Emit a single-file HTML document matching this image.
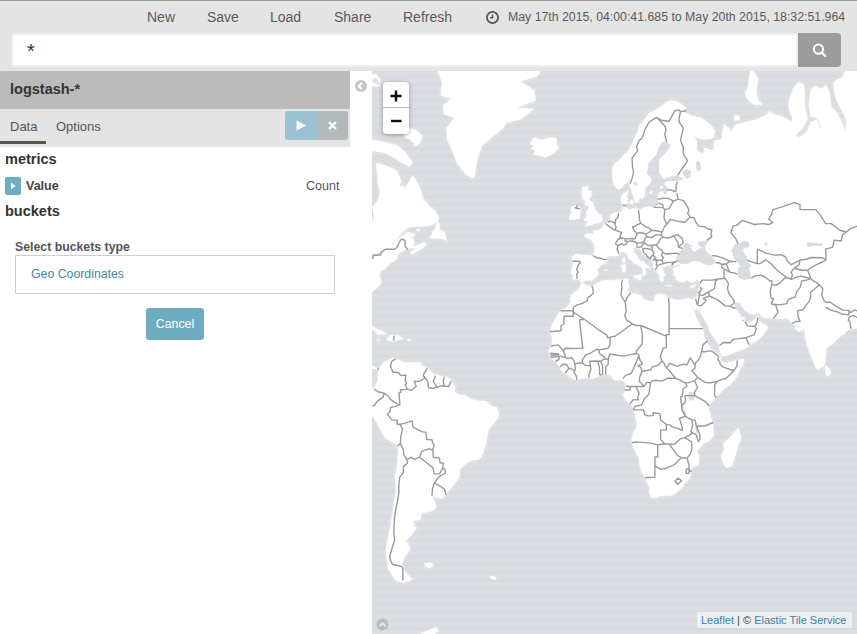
<!DOCTYPE html>
<html><head><meta charset="utf-8">
<style>
*{box-sizing:border-box;margin:0;padding:0}
html,body{width:857px;height:634px;overflow:hidden;background:#fff;font-family:"Liberation Sans",sans-serif;color:#444}
.abs{position:absolute}
#top{left:0;top:0;width:857px;height:71px;background:#e4e4e4;border-top:1px solid #9a9899;box-shadow:inset 0 1px 0 #e9e9e9}
.nav{top:7px;font-size:14px;color:#5a5a5a;white-space:nowrap;line-height:20px}
#time{left:508px;top:8px;font-size:12.3px;color:#5a5a5a;white-space:nowrap;line-height:18px}
#search{left:11px;top:33px;width:787px;height:34px;background:#fff;border:2px solid #ecf0f1;border-radius:4px 0 0 4px}
#star{left:27px;top:41px;font-size:20px;line-height:20px;color:#333}
#sbtn{left:798px;top:33px;width:43px;height:34px;background:#9c9c9c;border-radius:0 4px 4px 0}
#idx{left:0;top:71px;width:350px;height:38px;background:#bbbbbb}
#idx span{position:absolute;left:10px;top:10px;font-size:14.5px;font-weight:bold;color:#333}
#tabs{left:0;top:109px;width:350px;height:38px;background:#e4e4e4}
.tab{top:119px;font-size:13px;color:#555;line-height:16px}
#uline{left:0;top:141px;width:46px;height:3px;background:#555}
#play{left:285px;top:111px;width:32px;height:29px;background:#9ac2d3;border-radius:3px 0 0 3px}
#close{left:317px;top:111px;width:31px;height:29px;background:#b2babb;border-radius:0 3px 3px 0}
.h{font-size:14.5px;font-weight:bold;color:#333;line-height:18px}
#vicon{left:5px;top:177px;width:16px;height:18px;background:#6eadc1;border-radius:2px}
#sel{left:15px;top:255px;width:320px;height:39px;border:1px solid #cfcfcf;background:#fff}
#cancel{left:146px;top:308px;width:58px;height:32px;background:#6eadc1;border-radius:3px;color:#fff;font-size:12.3px;text-align:center;line-height:32px}
#map{left:372px;top:71px;width:485px;height:563px;overflow:hidden;background:#dadde1}
#attr{left:697px;top:612px;width:155px;height:16px;background:rgba(255,255,255,0.55);font-size:11px;line-height:16px;color:#444;padding-left:4px;white-space:nowrap}
#attr a{color:#3b7fa8;text-decoration:none}
#zoom{left:383px;top:82px;width:26px;height:52px;background:#fff;border-radius:4px;box-shadow:0 1px 4px rgba(0,0,0,0.35)}
</style></head><body>
<div id="top" class="abs"></div>
<div class="abs nav" style="left:147px">New</div>
<div class="abs nav" style="left:207px">Save</div>
<div class="abs nav" style="left:270px">Load</div>
<div class="abs nav" style="left:334px">Share</div>
<div class="abs nav" style="left:403px">Refresh</div>
<svg class="abs" style="left:485px;top:10px" width="15" height="15" viewBox="0 0 15 15"><circle cx="7.5" cy="7.5" r="5.6" fill="none" stroke="#555" stroke-width="1.8"/><path d="M7.5 4.5V7.8H5" fill="none" stroke="#555" stroke-width="1.5"/></svg>
<div id="time" class="abs">May 17th 2015, 04:00:41.685 to May 20th 2015, 18:32:51.964</div>
<div id="search" class="abs"></div>
<div id="star" class="abs">*</div>
<div id="sbtn" class="abs"><svg style="position:absolute;left:13px;top:9px" width="17" height="17" viewBox="0 0 17 17"><circle cx="7.5" cy="7.2" r="4.6" fill="none" stroke="#fff" stroke-width="2"/><path d="M10.8 10.5L14.3 14" stroke="#fff" stroke-width="2.2" stroke-linecap="round"/></svg></div>
<div id="idx" class="abs"><span>logstash-*</span></div>
<div id="tabs" class="abs"></div>
<div class="abs tab" style="left:10px">Data</div>
<div class="abs tab" style="left:56px">Options</div>
<div id="uline" class="abs"></div>
<div id="play" class="abs"><svg style="position:absolute;left:11px;top:9px" width="11" height="11" viewBox="0 0 11 11"><path d="M0.5 0.5L10 5.5L0.5 10.5Z" fill="#fff"/></svg></div>
<div id="close" class="abs"><svg style="position:absolute;left:10px;top:9px" width="11" height="11" viewBox="0 0 11 11"><path d="M2 2L9 9M9 2L2 9" stroke="#fff" stroke-width="2.2"/></svg></div>
<div class="abs h" style="left:5px;top:150px">metrics</div>
<div id="vicon" class="abs"><svg style="position:absolute;left:5px;top:5px" width="7" height="8" viewBox="0 0 7 8"><path d="M1 0.5L5.5 4L1 7.5Z" fill="#fff"/></svg></div>
<div class="abs" style="left:26px;top:179px;font-size:12.5px;font-weight:bold;color:#444">Value</div>
<div class="abs" style="left:306px;top:179px;font-size:12.5px;color:#555">Count</div>
<div class="abs h" style="left:5px;top:202px">buckets</div>
<div class="abs" style="left:15px;top:240px;font-size:12.3px;font-weight:bold;color:#555">Select buckets type</div>
<div id="sel" class="abs"></div>
<div class="abs" style="left:31px;top:267px;font-size:12.3px;color:#3f8aab">Geo Coordinates</div>
<div id="cancel" class="abs">Cancel</div>
<svg class="abs" style="left:354px;top:79px" width="14" height="14" viewBox="0 0 14 14"><circle cx="7" cy="7" r="6" fill="#c4c4c4"/><path d="M7.9 3.7L4.8 7L7.9 10.3" fill="none" stroke="#fff" stroke-width="2.2"/></svg>
<div id="map" class="abs">
<svg width="485" height="563" viewBox="372 71 485 563" style="position:absolute;left:0;top:0">
<defs>
<pattern id="wv" patternUnits="userSpaceOnUse" width="8" height="8" x="0" y="0"><path d="M-6 3.2Q-2 7.8 2 3.2Q6 7.8 10 3.2" fill="none" stroke="#d1d5da" stroke-width="1"/></pattern>
</defs>
<rect x="372" y="71" width="485" height="563" fill="#dadde1"/>
<rect x="372" y="71" width="485" height="563" fill="url(#wv)"/>
<filter id="bl" x="-5%" y="-5%" width="110%" height="110%"><feGaussianBlur stdDeviation="1.6"/></filter><path d="M437.8 71.0L442.1 83.1L440.4 95.3L450.8 98.7L443.0 105.7L443.9 114.3L454.3 117.8L446.5 128.2L447.3 140.4L452.5 150.8L457.7 164.6L464.7 173.3L473.3 178.5L475.1 175.0L476.8 161.2L482.0 145.6L490.7 138.6L502.8 128.2L506.3 123.0L520.2 119.6L534.0 109.1L516.7 107.4L535.8 100.5L534.0 90.1L520.2 81.4L537.5 76.2L541.0 71.0L548.0 50.0L430.0 50.0L432.0 60.0ZM529.7 143.9L534.0 137.6L541.1 139.7L551.1 136.9L556.5 138.3L556.8 145.9L559.3 147.3L555.3 151.9L545.4 157.7L538.3 155.2L533.4 154.5L535.4 150.6L530.3 148.6L534.6 145.9ZM629.3 18.7L637.8 25.7L644.9 43.8L660.6 32.4L674.8 11.4L669.1 -9.2L649.2 -12.6L626.4 -1.0ZM752.9 71.0L758.5 78.6L756.3 90.0L758.0 99.4L762.3 104.7L753.8 104.7L747.7 99.4L744.7 93.8L748.1 86.1L751.6 62.4L763.0 51.0ZM733.9 115.5L739.6 115.5L739.6 120.2L733.9 120.2ZM582.4 186.9L588.9 186.2L587.4 189.8L591.8 191.3L591.4 196.3L588.2 199.2L592.5 202.1L594.7 207.9L597.6 213.0L601.9 215.9L602.7 220.3L599.8 222.4L592.5 224.6L584.5 226.8L588.2 221.7L583.8 220.3L587.4 215.9L586.0 212.3L588.9 207.9L588.2 205.8L584.5 205.0L585.3 200.7L582.4 198.5L581.6 192.7ZM570.7 207.8L577.3 205.0L580.6 208.8L580.1 214.4L579.2 219.1L569.7 220.1L568.8 217.3L571.6 212.5ZM624.7 257.1L625.3 260.5L624.2 263.2L622.5 261.7L622.5 258.6ZM625.3 264.3L625.9 268.5L625.0 271.8L622.2 272.5L621.9 269.2L621.3 265.1ZM633.3 275.4L642.4 274.7L641.0 278.3L641.0 280.6L638.7 279.4L633.3 277.2ZM664.8 284.3L666.8 285.0L672.8 285.4L671.4 286.4L665.1 285.7ZM689.9 286.1L693.3 285.2L696.4 284.0L694.7 286.8L691.9 287.8L690.2 287.4ZM738.2 427.2L741.6 437.4L738.8 443.4L734.5 458.5L732.0 466.0L726.6 467.9L722.3 461.6L721.2 455.4L724.3 449.4L723.2 443.4L729.4 438.0L734.2 433.0ZM825.3 365.1L829.3 368.5L831.0 372.8L829.0 375.4L826.1 375.7L825.0 371.4ZM423.6 563.3L431.6 562.9L433.6 564.7L430.2 567.9L425.9 566.6ZM489.9 576.0L495.6 576.5L496.2 579.9L491.3 578.4ZM402.9 569.3L412.5 579.4L408.8 580.9L403.2 582.4L396.0 580.9L388.1 568.9L398.9 566.6ZM356.2 329.2L363.3 325.2L369.0 325.2L377.6 329.2L382.7 331.4L386.9 334.1L377.6 335.0L374.7 330.2L366.2 328.0L357.6 330.2ZM386.4 339.5L390.9 335.0L398.9 335.6L403.7 338.9L398.9 340.1L394.3 341.6L386.9 340.7ZM406.9 339.2L411.4 339.5L411.1 340.7L406.9 340.7ZM375.3 339.5L381.0 340.1L379.5 341.0L375.6 340.1ZM438.8 221.3L436.0 226.0L432.9 231.5L429.7 238.2L439.2 238.6L444.7 239.4L447.1 241.4L445.9 237.1L444.7 231.5L440.0 230.0L439.2 223.7ZM375.2 140.0L387.2 142.7L397.3 145.3L404.8 151.6L412.4 161.7L409.9 166.7L402.3 162.9L394.7 157.9L384.6 152.8L375.8 151.6L365.0 150.0L365.0 140.0ZM336.3 64.5L370.4 67.8L370.4 45.0L336.3 45.0ZM370.4 81.1L380.4 85.9L376.1 77.1ZM342.0 45.0L376.1 48.6L393.2 18.7L421.6 -40.8L342.0 -40.8ZM350.5 153.9L369.0 155.2L363.3 141.8L353.4 140.4ZM604.7 270.1L606.8 268.7L607.8 269.6L606.5 271.1L605.1 270.7ZM403.6 131.0L410.0 127.9L416.0 130.0L422.5 135.2L420.0 142.7L416.2 146.5L409.9 138.9L404.8 137.7ZM365.0 75.0L376.0 74.0L380.7 80.0L378.0 86.8L372.0 86.0L365.0 86.0ZM327.8 178.2L342.0 194.5L363.9 204.2L364.2 214.4L369.0 221.3L373.3 221.3L373.9 216.7L372.4 206.7L377.6 201.2L380.1 191.9L377.6 183.8L377.6 175.3L376.1 165.2L375.8 162.9L385.9 165.5L397.3 170.5L401.0 180.6L399.8 185.7L406.1 186.9L412.4 175.6L414.9 178.1L420.3 188.5L423.1 198.4L430.2 206.9L434.5 209.8L438.8 216.9L437.3 222.6L429.7 226.0L409.8 227.1L401.3 232.8L395.6 240.6L390.7 244.1L392.1 244.9L399.9 237.0L408.4 232.1L415.5 234.2L413.4 237.0L409.8 236.7L413.4 239.2L414.1 243.4L413.4 246.3L416.9 245.6L424.0 242.0L426.9 244.1L422.6 248.4L411.3 254.8L409.8 252.7L415.5 248.4L413.4 247.7L407.0 249.1L397.8 254.1L396.3 259.8L389.2 264.0L385.3 268.4L380.5 271.3L379.6 276.0L381.5 281.7L379.6 285.5L372.0 292.1L367.6 296.6L366.7 301.6L368.7 308.2L370.4 314.6L369.3 318.7L367.0 318.7L365.3 314.6L362.8 309.8L361.9 306.5L359.1 303.3L352.0 302.0L343.4 302.6L344.0 306.5L330.6 304.9L320.7 311.4L320.7 322.4L319.8 328.6L325.5 338.3L329.2 340.1L336.3 338.9L339.2 337.7L340.9 331.7L349.7 330.2L349.1 336.2L347.1 340.7L346.3 346.7L350.5 347.3L359.1 347.3L361.3 349.6L360.5 357.0L359.6 361.3L364.2 367.1L367.6 367.7L371.9 365.4L377.6 368.2L378.1 370.5L375.0 368.8L371.3 369.1L369.3 372.0L365.6 370.0L356.2 365.7L350.5 355.5L313.6 346.7L285.1 334.7L285.1 147.3ZM378.1 370.5L379.5 368.0L383.2 362.8L386.9 360.4L391.8 358.4L394.6 357.3L394.1 361.3L396.0 361.6L393.5 361.6L398.3 359.6L404.0 362.5L410.3 362.5L415.4 362.5L421.9 362.2L420.2 364.2L424.5 367.1L427.9 369.1L433.0 373.4L440.1 376.0L444.4 376.3L450.1 379.1L452.4 381.4L455.8 387.7L454.4 392.2L460.0 395.1L464.3 394.8L471.4 399.3L478.5 400.8L485.6 401.1L492.2 406.5L497.0 407.6L499.0 414.2L498.2 418.5L492.8 424.3L488.5 430.1L487.1 437.4L486.2 444.3L484.2 450.3L481.4 456.4L478.5 459.7L471.4 460.7L465.7 463.5L460.0 469.4L459.2 477.4L454.4 484.0L450.1 489.6L445.8 495.1L441.8 498.8L436.7 497.5L431.9 495.7L435.0 502.0L436.4 506.2L433.0 510.9L421.6 513.1L420.8 519.4L413.1 520.9L414.5 526.6L416.8 527.8L412.3 534.4L406.0 540.5L410.8 548.4L405.1 556.6L401.7 564.7L403.4 567.9L396.0 575.0L388.1 568.9L385.8 551.0L388.4 536.0L390.6 524.7L392.2 515.7L393.8 502.7L396.0 490.6L394.9 477.4L397.5 463.2L398.3 446.1L384.7 437.4L376.1 421.4L369.6 411.3L366.7 405.6L370.2 399.9L367.9 395.6L370.4 390.0L373.9 387.1L377.6 381.4L377.8 375.7ZM415.5 230.5L418.0 229.2L421.2 229.5L418.0 231.4ZM689.9 299.0L686.2 298.0L683.0 299.3L677.6 300.3L669.1 298.0L666.3 296.3L663.4 294.6L659.2 293.6L655.2 295.6L653.5 301.6L649.2 301.0L643.5 299.0L641.2 295.6L635.5 293.6L630.7 292.9L628.4 290.9L626.7 290.2L629.0 288.1L629.6 285.4L627.9 282.2L629.6 279.4L627.0 279.0L625.9 278.3L622.2 279.7L616.5 279.4L612.2 280.4L606.5 280.1L600.8 281.1L596.3 283.6L592.3 286.1L588.0 285.7L582.9 283.3L581.2 283.6L580.1 286.4L578.7 289.9L576.4 291.2L573.8 292.6L571.5 295.0L570.1 298.3L570.7 302.0L568.1 305.6L565.3 308.8L561.3 310.1L556.8 315.9L552.8 323.4L551.1 327.7L549.5 332.3L551.6 336.2L552.5 340.4L551.1 346.7L549.1 349.9L548.2 350.5L550.2 354.3L550.5 357.3L553.6 359.9L556.2 362.8L559.0 365.7L560.5 368.5L562.4 371.7L566.7 374.3L571.0 377.7L576.7 380.3L582.4 378.3L586.6 378.0L592.0 379.3L598.0 376.8L602.3 375.1L607.7 374.6L611.1 375.4L614.5 380.6L617.9 380.3L621.6 380.0L623.6 381.7L625.6 382.8L625.9 386.3L624.7 391.7L623.0 395.1L625.3 399.9L629.6 403.9L632.4 407.0L633.0 409.9L635.0 414.2L635.5 417.9L637.0 423.4L636.1 428.9L633.6 431.6L631.6 438.9L631.6 442.8L633.8 447.9L636.1 453.3L639.2 459.7L639.5 464.7L641.2 471.3L644.9 477.8L647.5 484.0L649.8 488.3L648.9 492.3L650.3 495.4L650.6 496.9L653.5 497.8L654.9 498.5L660.6 496.1L666.3 495.7L670.8 495.7L674.8 494.0L679.1 490.0L683.3 486.3L686.2 482.0L690.2 477.4L691.6 472.0L690.7 469.1L693.3 466.9L697.6 464.7L699.0 462.8L699.0 457.0L698.4 453.9L697.0 450.3L700.4 447.3L703.8 443.4L709.5 440.7L713.8 436.0L713.2 428.6L713.2 422.8L711.2 418.5L709.8 412.2L708.4 409.9L709.5 406.2L710.9 404.3L712.3 400.8L714.6 398.5L717.5 395.6L721.7 391.4L726.9 387.1L730.3 384.5L734.2 380.0L736.5 377.1L738.8 372.8L740.2 369.1L742.5 365.9L744.2 363.1L743.9 359.0L741.6 358.7L737.9 360.4L734.5 360.7L728.8 362.2L726.0 363.1L722.3 361.9L720.9 359.9L719.7 359.6L721.2 357.0L719.5 355.5L716.0 353.2L712.3 349.6L710.4 347.9L708.4 344.3L706.9 340.7L704.1 335.9L703.8 331.7L702.7 328.6L699.3 324.6L699.0 322.8L696.4 317.7L694.1 312.3L692.7 308.8L690.7 303.6L690.2 301.6ZM582.1 282.9L580.1 281.1L578.1 278.7L575.5 279.4L572.4 279.4L573.0 275.8L571.0 273.2L571.3 270.7L573.3 264.3L572.7 260.5L571.5 257.5L574.1 255.5L575.5 253.9L581.8 254.7L587.2 255.1L592.9 255.5L594.3 252.0L594.6 245.9L591.7 240.6L588.0 238.0L584.6 236.8L584.3 234.6L588.0 233.3L592.3 234.2L594.0 233.8L592.6 229.4L594.6 230.7L598.3 230.3L601.1 228.5L602.6 227.2L603.3 223.8L605.1 223.2L608.2 221.8L609.9 219.0L611.5 214.6L613.6 212.9L617.9 212.0L621.6 211.5L622.7 210.1L623.3 208.1L622.5 204.7L621.0 201.7L621.3 196.6L622.5 194.0L628.2 190.8L629.9 187.1L629.6 183.8L628.2 178.7L627.9 182.1L625.0 183.8L620.8 188.7L617.9 189.2L613.9 184.9L613.1 182.1L612.2 178.2L612.2 172.4L612.8 166.4L615.6 162.8L619.9 159.6L623.0 155.8L627.9 151.3L632.1 143.9L635.0 136.9L637.8 131.8L639.2 125.9L643.5 120.5L649.2 113.3L654.9 110.0L662.0 105.8L666.3 102.3L671.4 100.6L677.6 101.4L686.2 107.5L683.3 111.6L691.9 115.7L701.8 118.1L711.8 125.9L715.2 131.8L713.2 138.3L706.1 139.7L697.6 138.3L691.9 135.5L690.4 134.0L697.0 141.1L696.7 150.0L701.8 153.9L704.7 151.3L703.2 147.3L711.2 150.0L713.2 150.0L714.6 140.4L721.6 139.2L723.5 124.0L729.2 127.8L731.1 132.6L734.9 124.9L746.2 122.1L753.8 120.2L765.2 115.5L769.9 111.7L768.0 108.0L771.8 113.6L782.2 116.4L791.7 122.1L792.6 118.3L788.8 108.9L788.8 101.3L793.6 88.0L798.3 82.3L804.0 84.3L804.9 95.6L805.3 108.9L807.8 118.3L803.0 127.8L795.5 135.4L799.2 137.3L806.8 131.6L810.6 122.1L817.2 119.3L820.1 127.8L822.0 128.7L818.2 118.3L810.6 116.4L808.7 105.1L810.6 90.0L814.4 86.1L822.0 88.9L825.8 84.3L829.5 91.8L831.4 107.0L837.1 112.7L842.8 124.0L844.7 133.5L846.6 120.2L840.9 108.9L835.2 97.5L833.3 82.3L842.8 76.7L844.7 71.0L858.0 67.2L882.4 38.8L882.4 331.7L866.8 331.7L860.5 330.2L859.1 327.1L855.4 328.6L851.2 328.9L848.3 329.9L845.5 331.7L844.9 333.8L839.8 336.5L836.9 339.8L832.7 343.7L829.3 345.8L826.1 349.0L826.4 354.0L825.3 359.9L825.0 363.3L822.4 367.1L820.4 367.4L818.4 369.7L815.6 367.4L813.3 360.4L810.8 355.8L808.8 350.2L806.8 344.6L805.1 337.1L804.5 330.8L804.2 328.0L799.4 332.3L794.3 327.7L797.1 325.9L792.6 323.7L789.4 319.9L787.4 318.1L781.5 318.7L773.2 318.7L765.3 317.7L761.0 316.8L759.6 312.7L755.9 313.9L753.0 314.3L748.8 313.0L744.5 310.1L742.5 306.9L740.5 303.6L737.4 302.0L734.5 303.3L734.5 305.2L736.0 309.1L739.1 313.0L740.8 315.5L741.9 319.3L743.1 316.2L744.8 318.4L744.8 321.5L747.3 321.8L751.6 322.1L755.9 318.4L757.6 315.5L758.4 314.9L758.4 319.6L762.4 323.4L765.0 324.0L768.1 327.4L764.4 333.2L762.4 336.2L759.6 338.9L755.3 341.9L750.2 344.3L746.5 347.9L738.8 351.1L734.5 352.6L727.4 355.5L721.7 356.4L720.3 352.6L719.2 348.2L719.7 345.2L716.0 340.7L713.2 336.2L708.9 330.2L708.9 327.1L706.1 321.8L703.5 317.7L699.0 310.4L696.7 309.1L697.6 304.9L696.1 309.8L695.4 310.7L693.3 308.2L690.7 303.6L689.9 299.3L693.3 299.6L695.6 299.0L697.3 295.0L697.8 292.9L699.0 290.2L700.1 287.4L699.8 283.6L701.0 280.8L699.0 280.8L696.7 280.1L693.3 282.2L690.4 282.6L686.2 280.1L684.8 281.5L681.9 282.2L678.2 280.4L675.9 279.4L675.4 276.1L673.1 274.7L674.2 272.2L672.5 270.3L673.4 267.7L675.9 267.0L680.5 265.9L680.5 264.3L677.6 264.7L674.2 266.2L672.0 265.5L669.1 265.1L666.3 265.9L665.4 267.3L662.9 266.6L662.3 268.5L664.0 271.4L662.9 272.5L666.3 275.1L663.4 276.1L664.0 278.3L662.9 281.1L661.7 281.5L659.7 280.1L659.4 276.9L658.6 275.1L661.1 275.1L658.0 274.0L656.9 271.8L654.9 269.6L653.2 267.0L653.5 263.6L652.0 260.9L650.6 259.0L647.8 257.1L643.5 255.1L641.2 252.4L640.1 249.2L638.7 247.9L636.7 249.6L637.0 246.7L633.0 247.9L633.8 252.0L636.7 255.1L638.4 259.0L640.7 260.9L644.1 261.3L643.5 262.8L646.9 265.1L650.6 267.7L650.3 269.2L646.9 267.0L644.9 269.6L646.6 272.5L643.5 276.1L642.4 274.7L642.9 272.2L642.4 268.1L640.1 266.2L637.8 265.1L633.6 262.8L629.9 259.4L627.9 257.5L627.0 253.5L625.0 252.4L622.5 252.0L620.2 253.9L617.3 255.9L613.6 256.3L610.8 255.5L606.8 257.1L607.1 260.9L604.3 263.6L600.3 265.9L597.1 270.3L598.6 273.2L596.3 277.2L592.0 280.4L585.5 280.4L582.6 282.6ZM398.9 659.7L407.4 645.2L414.5 639.7L421.6 633.0L435.9 627.2L438.7 630.4L433.0 635.0L427.3 645.2L441.6 675.6L398.9 693.1Z" fill="#eef0f2" filter="url(#bl)"/>
<path d="M437.8 71.0L442.1 83.1L440.4 95.3L450.8 98.7L443.0 105.7L443.9 114.3L454.3 117.8L446.5 128.2L447.3 140.4L452.5 150.8L457.7 164.6L464.7 173.3L473.3 178.5L475.1 175.0L476.8 161.2L482.0 145.6L490.7 138.6L502.8 128.2L506.3 123.0L520.2 119.6L534.0 109.1L516.7 107.4L535.8 100.5L534.0 90.1L520.2 81.4L537.5 76.2L541.0 71.0L548.0 50.0L430.0 50.0L432.0 60.0ZM529.7 143.9L534.0 137.6L541.1 139.7L551.1 136.9L556.5 138.3L556.8 145.9L559.3 147.3L555.3 151.9L545.4 157.7L538.3 155.2L533.4 154.5L535.4 150.6L530.3 148.6L534.6 145.9ZM629.3 18.7L637.8 25.7L644.9 43.8L660.6 32.4L674.8 11.4L669.1 -9.2L649.2 -12.6L626.4 -1.0ZM752.9 71.0L758.5 78.6L756.3 90.0L758.0 99.4L762.3 104.7L753.8 104.7L747.7 99.4L744.7 93.8L748.1 86.1L751.6 62.4L763.0 51.0ZM733.9 115.5L739.6 115.5L739.6 120.2L733.9 120.2ZM582.4 186.9L588.9 186.2L587.4 189.8L591.8 191.3L591.4 196.3L588.2 199.2L592.5 202.1L594.7 207.9L597.6 213.0L601.9 215.9L602.7 220.3L599.8 222.4L592.5 224.6L584.5 226.8L588.2 221.7L583.8 220.3L587.4 215.9L586.0 212.3L588.9 207.9L588.2 205.8L584.5 205.0L585.3 200.7L582.4 198.5L581.6 192.7ZM570.7 207.8L577.3 205.0L580.6 208.8L580.1 214.4L579.2 219.1L569.7 220.1L568.8 217.3L571.6 212.5ZM624.7 257.1L625.3 260.5L624.2 263.2L622.5 261.7L622.5 258.6ZM625.3 264.3L625.9 268.5L625.0 271.8L622.2 272.5L621.9 269.2L621.3 265.1ZM633.3 275.4L642.4 274.7L641.0 278.3L641.0 280.6L638.7 279.4L633.3 277.2ZM664.8 284.3L666.8 285.0L672.8 285.4L671.4 286.4L665.1 285.7ZM689.9 286.1L693.3 285.2L696.4 284.0L694.7 286.8L691.9 287.8L690.2 287.4ZM738.2 427.2L741.6 437.4L738.8 443.4L734.5 458.5L732.0 466.0L726.6 467.9L722.3 461.6L721.2 455.4L724.3 449.4L723.2 443.4L729.4 438.0L734.2 433.0ZM825.3 365.1L829.3 368.5L831.0 372.8L829.0 375.4L826.1 375.7L825.0 371.4ZM423.6 563.3L431.6 562.9L433.6 564.7L430.2 567.9L425.9 566.6ZM489.9 576.0L495.6 576.5L496.2 579.9L491.3 578.4ZM402.9 569.3L412.5 579.4L408.8 580.9L403.2 582.4L396.0 580.9L388.1 568.9L398.9 566.6ZM356.2 329.2L363.3 325.2L369.0 325.2L377.6 329.2L382.7 331.4L386.9 334.1L377.6 335.0L374.7 330.2L366.2 328.0L357.6 330.2ZM386.4 339.5L390.9 335.0L398.9 335.6L403.7 338.9L398.9 340.1L394.3 341.6L386.9 340.7ZM406.9 339.2L411.4 339.5L411.1 340.7L406.9 340.7ZM375.3 339.5L381.0 340.1L379.5 341.0L375.6 340.1ZM438.8 221.3L436.0 226.0L432.9 231.5L429.7 238.2L439.2 238.6L444.7 239.4L447.1 241.4L445.9 237.1L444.7 231.5L440.0 230.0L439.2 223.7ZM375.2 140.0L387.2 142.7L397.3 145.3L404.8 151.6L412.4 161.7L409.9 166.7L402.3 162.9L394.7 157.9L384.6 152.8L375.8 151.6L365.0 150.0L365.0 140.0ZM336.3 64.5L370.4 67.8L370.4 45.0L336.3 45.0ZM370.4 81.1L380.4 85.9L376.1 77.1ZM342.0 45.0L376.1 48.6L393.2 18.7L421.6 -40.8L342.0 -40.8ZM350.5 153.9L369.0 155.2L363.3 141.8L353.4 140.4ZM604.7 270.1L606.8 268.7L607.8 269.6L606.5 271.1L605.1 270.7ZM403.6 131.0L410.0 127.9L416.0 130.0L422.5 135.2L420.0 142.7L416.2 146.5L409.9 138.9L404.8 137.7ZM365.0 75.0L376.0 74.0L380.7 80.0L378.0 86.8L372.0 86.0L365.0 86.0ZM327.8 178.2L342.0 194.5L363.9 204.2L364.2 214.4L369.0 221.3L373.3 221.3L373.9 216.7L372.4 206.7L377.6 201.2L380.1 191.9L377.6 183.8L377.6 175.3L376.1 165.2L375.8 162.9L385.9 165.5L397.3 170.5L401.0 180.6L399.8 185.7L406.1 186.9L412.4 175.6L414.9 178.1L420.3 188.5L423.1 198.4L430.2 206.9L434.5 209.8L438.8 216.9L437.3 222.6L429.7 226.0L409.8 227.1L401.3 232.8L395.6 240.6L390.7 244.1L392.1 244.9L399.9 237.0L408.4 232.1L415.5 234.2L413.4 237.0L409.8 236.7L413.4 239.2L414.1 243.4L413.4 246.3L416.9 245.6L424.0 242.0L426.9 244.1L422.6 248.4L411.3 254.8L409.8 252.7L415.5 248.4L413.4 247.7L407.0 249.1L397.8 254.1L396.3 259.8L389.2 264.0L385.3 268.4L380.5 271.3L379.6 276.0L381.5 281.7L379.6 285.5L372.0 292.1L367.6 296.6L366.7 301.6L368.7 308.2L370.4 314.6L369.3 318.7L367.0 318.7L365.3 314.6L362.8 309.8L361.9 306.5L359.1 303.3L352.0 302.0L343.4 302.6L344.0 306.5L330.6 304.9L320.7 311.4L320.7 322.4L319.8 328.6L325.5 338.3L329.2 340.1L336.3 338.9L339.2 337.7L340.9 331.7L349.7 330.2L349.1 336.2L347.1 340.7L346.3 346.7L350.5 347.3L359.1 347.3L361.3 349.6L360.5 357.0L359.6 361.3L364.2 367.1L367.6 367.7L371.9 365.4L377.6 368.2L378.1 370.5L375.0 368.8L371.3 369.1L369.3 372.0L365.6 370.0L356.2 365.7L350.5 355.5L313.6 346.7L285.1 334.7L285.1 147.3ZM378.1 370.5L379.5 368.0L383.2 362.8L386.9 360.4L391.8 358.4L394.6 357.3L394.1 361.3L396.0 361.6L393.5 361.6L398.3 359.6L404.0 362.5L410.3 362.5L415.4 362.5L421.9 362.2L420.2 364.2L424.5 367.1L427.9 369.1L433.0 373.4L440.1 376.0L444.4 376.3L450.1 379.1L452.4 381.4L455.8 387.7L454.4 392.2L460.0 395.1L464.3 394.8L471.4 399.3L478.5 400.8L485.6 401.1L492.2 406.5L497.0 407.6L499.0 414.2L498.2 418.5L492.8 424.3L488.5 430.1L487.1 437.4L486.2 444.3L484.2 450.3L481.4 456.4L478.5 459.7L471.4 460.7L465.7 463.5L460.0 469.4L459.2 477.4L454.4 484.0L450.1 489.6L445.8 495.1L441.8 498.8L436.7 497.5L431.9 495.7L435.0 502.0L436.4 506.2L433.0 510.9L421.6 513.1L420.8 519.4L413.1 520.9L414.5 526.6L416.8 527.8L412.3 534.4L406.0 540.5L410.8 548.4L405.1 556.6L401.7 564.7L403.4 567.9L396.0 575.0L388.1 568.9L385.8 551.0L388.4 536.0L390.6 524.7L392.2 515.7L393.8 502.7L396.0 490.6L394.9 477.4L397.5 463.2L398.3 446.1L384.7 437.4L376.1 421.4L369.6 411.3L366.7 405.6L370.2 399.9L367.9 395.6L370.4 390.0L373.9 387.1L377.6 381.4L377.8 375.7ZM415.5 230.5L418.0 229.2L421.2 229.5L418.0 231.4ZM689.9 299.0L686.2 298.0L683.0 299.3L677.6 300.3L669.1 298.0L666.3 296.3L663.4 294.6L659.2 293.6L655.2 295.6L653.5 301.6L649.2 301.0L643.5 299.0L641.2 295.6L635.5 293.6L630.7 292.9L628.4 290.9L626.7 290.2L629.0 288.1L629.6 285.4L627.9 282.2L629.6 279.4L627.0 279.0L625.9 278.3L622.2 279.7L616.5 279.4L612.2 280.4L606.5 280.1L600.8 281.1L596.3 283.6L592.3 286.1L588.0 285.7L582.9 283.3L581.2 283.6L580.1 286.4L578.7 289.9L576.4 291.2L573.8 292.6L571.5 295.0L570.1 298.3L570.7 302.0L568.1 305.6L565.3 308.8L561.3 310.1L556.8 315.9L552.8 323.4L551.1 327.7L549.5 332.3L551.6 336.2L552.5 340.4L551.1 346.7L549.1 349.9L548.2 350.5L550.2 354.3L550.5 357.3L553.6 359.9L556.2 362.8L559.0 365.7L560.5 368.5L562.4 371.7L566.7 374.3L571.0 377.7L576.7 380.3L582.4 378.3L586.6 378.0L592.0 379.3L598.0 376.8L602.3 375.1L607.7 374.6L611.1 375.4L614.5 380.6L617.9 380.3L621.6 380.0L623.6 381.7L625.6 382.8L625.9 386.3L624.7 391.7L623.0 395.1L625.3 399.9L629.6 403.9L632.4 407.0L633.0 409.9L635.0 414.2L635.5 417.9L637.0 423.4L636.1 428.9L633.6 431.6L631.6 438.9L631.6 442.8L633.8 447.9L636.1 453.3L639.2 459.7L639.5 464.7L641.2 471.3L644.9 477.8L647.5 484.0L649.8 488.3L648.9 492.3L650.3 495.4L650.6 496.9L653.5 497.8L654.9 498.5L660.6 496.1L666.3 495.7L670.8 495.7L674.8 494.0L679.1 490.0L683.3 486.3L686.2 482.0L690.2 477.4L691.6 472.0L690.7 469.1L693.3 466.9L697.6 464.7L699.0 462.8L699.0 457.0L698.4 453.9L697.0 450.3L700.4 447.3L703.8 443.4L709.5 440.7L713.8 436.0L713.2 428.6L713.2 422.8L711.2 418.5L709.8 412.2L708.4 409.9L709.5 406.2L710.9 404.3L712.3 400.8L714.6 398.5L717.5 395.6L721.7 391.4L726.9 387.1L730.3 384.5L734.2 380.0L736.5 377.1L738.8 372.8L740.2 369.1L742.5 365.9L744.2 363.1L743.9 359.0L741.6 358.7L737.9 360.4L734.5 360.7L728.8 362.2L726.0 363.1L722.3 361.9L720.9 359.9L719.7 359.6L721.2 357.0L719.5 355.5L716.0 353.2L712.3 349.6L710.4 347.9L708.4 344.3L706.9 340.7L704.1 335.9L703.8 331.7L702.7 328.6L699.3 324.6L699.0 322.8L696.4 317.7L694.1 312.3L692.7 308.8L690.7 303.6L690.2 301.6ZM582.1 282.9L580.1 281.1L578.1 278.7L575.5 279.4L572.4 279.4L573.0 275.8L571.0 273.2L571.3 270.7L573.3 264.3L572.7 260.5L571.5 257.5L574.1 255.5L575.5 253.9L581.8 254.7L587.2 255.1L592.9 255.5L594.3 252.0L594.6 245.9L591.7 240.6L588.0 238.0L584.6 236.8L584.3 234.6L588.0 233.3L592.3 234.2L594.0 233.8L592.6 229.4L594.6 230.7L598.3 230.3L601.1 228.5L602.6 227.2L603.3 223.8L605.1 223.2L608.2 221.8L609.9 219.0L611.5 214.6L613.6 212.9L617.9 212.0L621.6 211.5L622.7 210.1L623.3 208.1L622.5 204.7L621.0 201.7L621.3 196.6L622.5 194.0L628.2 190.8L629.9 187.1L629.6 183.8L628.2 178.7L627.9 182.1L625.0 183.8L620.8 188.7L617.9 189.2L613.9 184.9L613.1 182.1L612.2 178.2L612.2 172.4L612.8 166.4L615.6 162.8L619.9 159.6L623.0 155.8L627.9 151.3L632.1 143.9L635.0 136.9L637.8 131.8L639.2 125.9L643.5 120.5L649.2 113.3L654.9 110.0L662.0 105.8L666.3 102.3L671.4 100.6L677.6 101.4L686.2 107.5L683.3 111.6L691.9 115.7L701.8 118.1L711.8 125.9L715.2 131.8L713.2 138.3L706.1 139.7L697.6 138.3L691.9 135.5L690.4 134.0L697.0 141.1L696.7 150.0L701.8 153.9L704.7 151.3L703.2 147.3L711.2 150.0L713.2 150.0L714.6 140.4L721.6 139.2L723.5 124.0L729.2 127.8L731.1 132.6L734.9 124.9L746.2 122.1L753.8 120.2L765.2 115.5L769.9 111.7L768.0 108.0L771.8 113.6L782.2 116.4L791.7 122.1L792.6 118.3L788.8 108.9L788.8 101.3L793.6 88.0L798.3 82.3L804.0 84.3L804.9 95.6L805.3 108.9L807.8 118.3L803.0 127.8L795.5 135.4L799.2 137.3L806.8 131.6L810.6 122.1L817.2 119.3L820.1 127.8L822.0 128.7L818.2 118.3L810.6 116.4L808.7 105.1L810.6 90.0L814.4 86.1L822.0 88.9L825.8 84.3L829.5 91.8L831.4 107.0L837.1 112.7L842.8 124.0L844.7 133.5L846.6 120.2L840.9 108.9L835.2 97.5L833.3 82.3L842.8 76.7L844.7 71.0L858.0 67.2L882.4 38.8L882.4 331.7L866.8 331.7L860.5 330.2L859.1 327.1L855.4 328.6L851.2 328.9L848.3 329.9L845.5 331.7L844.9 333.8L839.8 336.5L836.9 339.8L832.7 343.7L829.3 345.8L826.1 349.0L826.4 354.0L825.3 359.9L825.0 363.3L822.4 367.1L820.4 367.4L818.4 369.7L815.6 367.4L813.3 360.4L810.8 355.8L808.8 350.2L806.8 344.6L805.1 337.1L804.5 330.8L804.2 328.0L799.4 332.3L794.3 327.7L797.1 325.9L792.6 323.7L789.4 319.9L787.4 318.1L781.5 318.7L773.2 318.7L765.3 317.7L761.0 316.8L759.6 312.7L755.9 313.9L753.0 314.3L748.8 313.0L744.5 310.1L742.5 306.9L740.5 303.6L737.4 302.0L734.5 303.3L734.5 305.2L736.0 309.1L739.1 313.0L740.8 315.5L741.9 319.3L743.1 316.2L744.8 318.4L744.8 321.5L747.3 321.8L751.6 322.1L755.9 318.4L757.6 315.5L758.4 314.9L758.4 319.6L762.4 323.4L765.0 324.0L768.1 327.4L764.4 333.2L762.4 336.2L759.6 338.9L755.3 341.9L750.2 344.3L746.5 347.9L738.8 351.1L734.5 352.6L727.4 355.5L721.7 356.4L720.3 352.6L719.2 348.2L719.7 345.2L716.0 340.7L713.2 336.2L708.9 330.2L708.9 327.1L706.1 321.8L703.5 317.7L699.0 310.4L696.7 309.1L697.6 304.9L696.1 309.8L695.4 310.7L693.3 308.2L690.7 303.6L689.9 299.3L693.3 299.6L695.6 299.0L697.3 295.0L697.8 292.9L699.0 290.2L700.1 287.4L699.8 283.6L701.0 280.8L699.0 280.8L696.7 280.1L693.3 282.2L690.4 282.6L686.2 280.1L684.8 281.5L681.9 282.2L678.2 280.4L675.9 279.4L675.4 276.1L673.1 274.7L674.2 272.2L672.5 270.3L673.4 267.7L675.9 267.0L680.5 265.9L680.5 264.3L677.6 264.7L674.2 266.2L672.0 265.5L669.1 265.1L666.3 265.9L665.4 267.3L662.9 266.6L662.3 268.5L664.0 271.4L662.9 272.5L666.3 275.1L663.4 276.1L664.0 278.3L662.9 281.1L661.7 281.5L659.7 280.1L659.4 276.9L658.6 275.1L661.1 275.1L658.0 274.0L656.9 271.8L654.9 269.6L653.2 267.0L653.5 263.6L652.0 260.9L650.6 259.0L647.8 257.1L643.5 255.1L641.2 252.4L640.1 249.2L638.7 247.9L636.7 249.6L637.0 246.7L633.0 247.9L633.8 252.0L636.7 255.1L638.4 259.0L640.7 260.9L644.1 261.3L643.5 262.8L646.9 265.1L650.6 267.7L650.3 269.2L646.9 267.0L644.9 269.6L646.6 272.5L643.5 276.1L642.4 274.7L642.9 272.2L642.4 268.1L640.1 266.2L637.8 265.1L633.6 262.8L629.9 259.4L627.9 257.5L627.0 253.5L625.0 252.4L622.5 252.0L620.2 253.9L617.3 255.9L613.6 256.3L610.8 255.5L606.8 257.1L607.1 260.9L604.3 263.6L600.3 265.9L597.1 270.3L598.6 273.2L596.3 277.2L592.0 280.4L585.5 280.4L582.6 282.6ZM398.9 659.7L407.4 645.2L414.5 639.7L421.6 633.0L435.9 627.2L438.7 630.4L433.0 635.0L427.3 645.2L441.6 675.6L398.9 693.1Z" fill="#ffffff"/>
<path d="M733.1 246.7L736.0 243.5L738.8 243.5L744.5 240.6L748.8 241.8L749.3 246.7L743.9 248.4L743.1 251.2L747.3 257.8L748.2 262.8L751.6 265.5L748.8 268.5L750.2 271.4L751.3 278.3L744.5 280.1L738.8 277.6L737.1 274.3L738.2 269.9L738.8 266.6L740.8 267.0L737.4 262.8L734.5 259.0L732.8 255.5L733.1 253.1L731.1 251.2L732.5 248.8ZM676.2 259.0L677.6 255.1L679.4 252.0L682.5 248.4L684.8 243.0L687.6 242.6L690.4 245.1L693.3 245.5L690.4 247.5L693.3 251.2L695.6 251.6L699.0 248.8L701.8 247.9L699.8 245.9L697.6 244.3L698.7 241.8L706.1 240.6L709.5 239.7L707.5 243.0L706.1 245.1L705.0 247.9L706.1 251.2L710.4 255.1L716.0 260.9L716.3 262.8L711.8 265.1L706.1 265.1L700.4 262.1L697.6 260.9L693.3 260.9L687.6 264.0L681.1 264.0L677.6 262.1L677.6 260.9ZM628.2 190.6L627.9 193.5L627.3 197.1L628.7 198.6L627.0 200.7L625.9 204.7L626.4 207.2L629.0 209.6L632.1 208.6L636.4 207.2L639.2 210.1L644.9 207.2L650.6 206.2L654.3 207.6L658.3 204.7L658.0 199.7L657.7 195.6L659.4 192.4L662.3 190.8L664.8 194.5L667.1 193.5L667.4 187.6L664.8 184.9L664.6 182.1L667.7 181.0L673.4 181.0L677.6 181.0L684.2 178.7L680.5 177.0L676.2 175.3L669.1 177.0L663.1 179.3L661.4 175.3L658.9 172.4L659.2 163.4L659.4 159.0L664.8 153.9L669.1 148.0L670.5 145.3L666.8 141.8L662.0 141.8L658.3 148.6L656.3 155.2L652.0 159.0L648.6 163.4L647.5 169.4L646.9 174.1L650.6 177.6L651.8 181.6L648.6 184.9L645.5 188.1L644.9 194.5L643.5 198.6L639.8 198.6L638.4 202.7L634.7 202.7L634.7 200.2L633.8 198.6L631.8 192.4L631.0 189.8L629.3 186.5ZM682.8 171.2L686.2 168.8L691.3 171.2L690.4 177.0L686.2 178.7L683.3 175.3ZM696.1 161.5L699.3 160.9L701.3 168.2L698.4 171.8L696.4 169.4ZM633.3 182.1L636.4 181.6L637.8 184.9L635.5 186.0L633.6 184.9ZM688.5 391.9L693.3 391.7L695.6 393.4L694.1 399.9L689.6 400.8L687.9 397.1ZM680.8 402.2L682.2 402.2L685.0 411.3L686.7 417.1L685.0 417.6L683.0 414.2L681.3 408.5ZM694.7 419.9L695.8 420.2L697.3 425.7L698.4 433.0L696.1 432.4L695.3 427.2ZM764.7 242.6L767.5 242.6L767.5 245.5L764.7 245.5ZM807.1 243.0L811.3 242.6L818.4 243.5L823.3 243.0L821.3 245.9L814.2 245.5L809.9 247.1L807.1 245.9ZM371.0 255.9L374.7 255.5L381.0 255.1L381.3 252.4L377.6 253.5L371.9 253.9ZM360.5 262.1L366.2 262.8L373.3 259.0L373.6 257.5L369.0 258.6L361.3 260.5ZM359.1 245.1L366.2 246.7L370.4 249.2L370.7 251.2L365.9 249.6L363.6 257.1L359.1 255.1ZM377.6 165.2L387.5 167.6L393.2 168.8Z" fill="#dadde1"/>
<path d="M733.1 246.7L736.0 243.5L738.8 243.5L744.5 240.6L748.8 241.8L749.3 246.7L743.9 248.4L743.1 251.2L747.3 257.8L748.2 262.8L751.6 265.5L748.8 268.5L750.2 271.4L751.3 278.3L744.5 280.1L738.8 277.6L737.1 274.3L738.2 269.9L738.8 266.6L740.8 267.0L737.4 262.8L734.5 259.0L732.8 255.5L733.1 253.1L731.1 251.2L732.5 248.8ZM676.2 259.0L677.6 255.1L679.4 252.0L682.5 248.4L684.8 243.0L687.6 242.6L690.4 245.1L693.3 245.5L690.4 247.5L693.3 251.2L695.6 251.6L699.0 248.8L701.8 247.9L699.8 245.9L697.6 244.3L698.7 241.8L706.1 240.6L709.5 239.7L707.5 243.0L706.1 245.1L705.0 247.9L706.1 251.2L710.4 255.1L716.0 260.9L716.3 262.8L711.8 265.1L706.1 265.1L700.4 262.1L697.6 260.9L693.3 260.9L687.6 264.0L681.1 264.0L677.6 262.1L677.6 260.9ZM628.2 190.6L627.9 193.5L627.3 197.1L628.7 198.6L627.0 200.7L625.9 204.7L626.4 207.2L629.0 209.6L632.1 208.6L636.4 207.2L639.2 210.1L644.9 207.2L650.6 206.2L654.3 207.6L658.3 204.7L658.0 199.7L657.7 195.6L659.4 192.4L662.3 190.8L664.8 194.5L667.1 193.5L667.4 187.6L664.8 184.9L664.6 182.1L667.7 181.0L673.4 181.0L677.6 181.0L684.2 178.7L680.5 177.0L676.2 175.3L669.1 177.0L663.1 179.3L661.4 175.3L658.9 172.4L659.2 163.4L659.4 159.0L664.8 153.9L669.1 148.0L670.5 145.3L666.8 141.8L662.0 141.8L658.3 148.6L656.3 155.2L652.0 159.0L648.6 163.4L647.5 169.4L646.9 174.1L650.6 177.6L651.8 181.6L648.6 184.9L645.5 188.1L644.9 194.5L643.5 198.6L639.8 198.6L638.4 202.7L634.7 202.7L634.7 200.2L633.8 198.6L631.8 192.4L631.0 189.8L629.3 186.5ZM682.8 171.2L686.2 168.8L691.3 171.2L690.4 177.0L686.2 178.7L683.3 175.3ZM696.1 161.5L699.3 160.9L701.3 168.2L698.4 171.8L696.4 169.4ZM633.3 182.1L636.4 181.6L637.8 184.9L635.5 186.0L633.6 184.9ZM688.5 391.9L693.3 391.7L695.6 393.4L694.1 399.9L689.6 400.8L687.9 397.1ZM680.8 402.2L682.2 402.2L685.0 411.3L686.7 417.1L685.0 417.6L683.0 414.2L681.3 408.5ZM694.7 419.9L695.8 420.2L697.3 425.7L698.4 433.0L696.1 432.4L695.3 427.2ZM764.7 242.6L767.5 242.6L767.5 245.5L764.7 245.5ZM807.1 243.0L811.3 242.6L818.4 243.5L823.3 243.0L821.3 245.9L814.2 245.5L809.9 247.1L807.1 245.9ZM371.0 255.9L374.7 255.5L381.0 255.1L381.3 252.4L377.6 253.5L371.9 253.9ZM360.5 262.1L366.2 262.8L373.3 259.0L373.6 257.5L369.0 258.6L361.3 260.5ZM359.1 245.1L366.2 246.7L370.4 249.2L370.7 251.2L365.9 249.6L363.6 257.1L359.1 255.1ZM377.6 165.2L387.5 167.6L393.2 168.8Z" fill="url(#wv)"/>
<path d="M629.3 203.2L632.1 204.9L633.8 201.7L633.0 199.2L629.9 200.2ZM625.6 202.2L628.2 204.7L628.7 201.7L626.7 201.7ZM649.5 192.9L651.5 189.8L652.3 190.3L651.2 194.0ZM644.6 198.6L646.6 192.9L645.5 198.1ZM660.0 186.5L664.3 186.0L660.6 189.8Z" fill="#ffffff"/>
<path d="M377.8 368.0L378.4 370.3M395.2 359.0L391.8 361.3L390.4 366.2L392.1 370.0L392.6 372.0L398.6 372.8L400.6 375.4L406.0 375.1L405.1 380.0L406.6 383.4L405.1 384.8L407.4 389.4M407.4 389.4L400.3 389.7L400.9 392.2L398.9 393.1L400.0 404.8M400.0 404.8L396.9 403.6L390.6 399.6L388.4 396.2L384.1 393.1M384.1 393.1L377.8 391.7L373.9 388.8M384.1 393.1L383.0 397.4L377.0 401.3L374.4 405.6L371.9 405.6L369.6 402.5M427.3 368.5L425.3 371.4L423.9 373.7L423.4 376.0L425.3 378.0M425.3 378.0L419.4 381.4L414.2 381.1L416.2 386.3L411.7 390.2L408.0 389.4L407.4 389.4M425.3 378.0L427.6 381.4L428.5 387.7L433.0 388.5L435.9 387.4L437.3 387.4M435.3 375.7L433.3 381.4L437.3 387.4M437.3 387.4L441.6 385.7L444.1 386.3M444.4 376.6L443.3 380.8L444.1 386.3M444.1 386.3L448.7 386.3L451.2 380.8M400.0 404.8L390.6 407.6L389.8 411.6L387.5 414.2L391.8 419.9L397.2 420.2L397.2 424.3L400.0 424.3M400.0 424.3L402.6 428.9L400.9 436.0L400.3 443.4M400.3 443.4L397.8 445.9M400.0 424.3L404.6 423.4L412.0 420.8L413.1 427.2L421.6 431.6L425.9 432.4L426.8 439.5L431.9 439.8L433.0 443.4L434.4 444.9M400.3 443.4L403.2 449.1L404.0 454.8L406.9 459.4M406.9 459.4L411.1 457.3L414.8 459.4L419.4 457.0M419.4 457.0L422.2 450.9L429.9 448.8L432.5 450.3L434.4 444.9M406.9 459.4L407.4 463.2L403.2 466.9L403.4 472.6L399.7 477.4L398.9 484.0L398.9 492.3L397.5 500.9L396.0 508.0L394.6 517.1L394.1 524.7L393.8 532.5L394.6 540.5L392.1 548.0L389.5 557.5L392.3 564.3L401.7 566.6L402.9 569.3M402.9 569.3L402.9 580.4M419.4 457.0L427.3 463.2L433.0 467.9L434.2 473.6L439.6 473.9L442.7 468.2M442.7 468.2L443.5 463.2L440.1 462.8L439.3 457.9L433.3 457.3L433.0 451.2L432.5 450.3M442.7 468.2L445.0 469.4L445.3 473.3L439.3 476.5L434.2 483.0M434.2 483.0L432.5 489.0L431.9 495.7M434.2 483.0L438.7 485.3L444.4 489.0L446.1 494.7M372.7 255.9L373.3 255.5L381.0 254.7L381.0 252.4L385.5 249.2L394.6 249.2L396.9 247.5L398.9 243.0L401.2 239.3L404.0 239.7L405.1 240.6L405.1 246.3L406.9 248.4L407.7 250.0M361.9 260.9L369.0 259.4L373.3 257.8L372.7 255.9M394.1 335.6L393.8 340.7M591.7 286.1L592.9 288.1L593.2 293.3L590.9 295.6L587.5 298.0L587.5 300.3L582.4 303.3L576.7 305.2L573.3 307.5L573.3 310.7M560.5 310.7L573.3 310.7L573.3 312.0M573.3 312.0L573.3 316.2L563.9 316.2L563.9 324.0L561.0 325.5L561.0 330.8L549.5 331.7M573.3 312.0L584.3 319.3M584.3 319.3L579.5 319.6L582.4 345.5L582.9 348.2L571.3 348.5L565.3 348.2L563.3 350.8M563.3 350.8L558.2 344.9L551.1 346.1M584.3 319.3L601.4 331.7L607.1 335.3L607.4 337.7L610.2 337.1M610.2 337.1L615.1 336.2L632.1 324.0M632.1 324.0L629.3 321.2L627.3 321.2L624.7 315.5L626.2 311.4L625.3 302.3M625.3 302.3L620.8 295.0L621.9 287.8L621.6 283.6L622.5 279.7M625.3 302.3L627.0 297.6L630.7 292.9M632.1 324.0L636.7 325.5L640.7 325.5M640.7 325.5L666.3 336.2M666.3 336.2L666.3 334.7L669.1 334.7L669.1 328.6M669.1 328.6L669.1 303.3L668.5 298.3L669.4 298.0M669.1 328.6L687.0 328.6L691.9 328.6L703.0 328.6M610.2 337.1L609.9 345.2L608.2 348.2L599.1 349.9M599.1 349.9L596.6 349.3L592.3 352.0L589.5 353.7L585.8 354.9L582.4 359.9L582.4 363.1M563.3 350.8L565.6 357.3M565.6 357.3L567.8 358.7L571.5 357.5L573.8 360.4L574.7 363.9M574.7 363.9L580.4 362.8L582.4 363.1M582.4 363.1L585.8 365.4L590.3 365.7M590.3 365.7L589.8 361.3L597.7 361.0M597.7 361.0L600.6 361.3L604.8 358.7M604.8 358.7L604.3 356.7L600.6 354.6L599.1 352.6L599.1 349.9M608.2 359.3L609.7 354.0L617.3 355.2L623.6 356.1L630.7 354.6L636.7 353.5M604.8 358.7L608.2 359.3M636.7 353.5L636.1 351.4L642.1 344.0L642.4 335.0L640.7 325.5M666.3 336.2L666.3 347.6L663.1 348.2L660.3 356.7L662.0 361.3M662.0 361.3L657.7 365.4L652.0 367.1L650.9 370.0L644.9 370.8L642.1 371.4M642.1 371.4L640.7 367.1L637.8 365.7L642.4 364.2L639.2 358.4L639.2 355.5L636.7 353.5M638.4 356.1L636.7 361.3L633.6 368.2L631.6 372.8L629.3 374.3L625.9 375.1L623.0 378.6M608.2 359.3L608.2 364.2L605.7 367.1L605.7 374.6M600.6 361.3L602.6 365.7L602.6 375.1M597.7 361.0L599.4 367.1L599.7 374.3L601.4 375.4M590.3 365.7L590.9 370.0L588.9 374.3L589.2 378.3M576.7 380.3L576.4 376.3L573.8 371.7L574.7 370.8M574.7 370.8L575.5 368.5L574.7 363.9M574.7 370.8L571.0 368.5L568.7 368.5M568.7 368.5L565.3 373.1M568.7 368.5L567.8 366.2L566.1 364.2L562.4 364.5L560.2 367.1M559.0 356.4L559.0 359.3L555.3 361.6M565.6 357.3L559.0 356.4M559.0 356.4L550.5 357.3M550.2 353.2L558.7 354.0L558.7 354.9L550.5 355.2M707.8 340.7L703.2 344.6L701.5 351.7M701.5 351.7L700.4 356.4L698.1 360.2L695.6 362.8L695.0 365.7M663.1 361.6L666.3 368.0L670.0 363.3L674.8 365.4L677.6 366.2L683.3 364.2L687.0 364.8L690.2 357.8L692.7 361.3L695.0 365.7M695.0 365.7L695.0 368.2L691.9 370.5L697.6 377.4M662.0 361.3L663.1 361.6M666.3 368.0L669.4 370.5L673.4 375.7L675.9 378.3M675.9 378.3L667.4 378.3L661.7 381.1L655.7 380.3L652.3 381.1L650.6 382.6M650.6 382.6L646.4 382.6L644.1 386.5M644.1 386.5L639.5 381.4L639.5 377.7L642.1 371.4M644.1 386.5L635.8 386.5L630.1 386.5L625.9 386.3M635.8 386.5L639.2 393.4L637.5 397.6L638.4 399.9L633.6 399.6L629.6 403.9M630.1 386.5L630.1 390.0L624.7 390.0M650.6 382.6L648.9 394.2L644.4 398.8L641.5 405.0L635.0 406.5L633.0 409.9M633.0 409.9L643.5 409.9L644.9 414.8L648.1 415.9L653.2 415.6L653.2 412.8L656.3 413.3L660.0 413.6L660.6 420.2L666.0 424.0L666.3 424.9M666.3 424.9L666.3 430.1L660.6 430.1L660.6 439.5L664.6 443.7M631.6 442.8L636.4 441.9L650.6 443.1L657.7 444.9L664.6 443.7L669.7 444.3M657.7 444.9L657.7 457.0L654.9 457.0L654.9 465.7M654.9 465.7L654.9 477.1L644.9 477.8M654.9 465.7L660.6 469.4L666.3 468.2L674.2 464.7L681.6 457.6M669.7 444.3L672.0 447.9L677.6 455.7L681.6 457.6M681.6 457.6L687.0 458.2M687.0 458.2L690.4 453.9L691.9 449.4L691.6 441.9L684.5 437.7M669.7 444.3L674.8 444.0L680.2 438.9L684.5 437.7M687.0 458.2L689.0 464.7L689.0 469.4L691.6 472.0M674.8 481.0L678.2 478.1L681.6 480.7L677.6 484.3L674.8 481.0M686.2 468.8L689.0 469.4L689.0 473.3L686.2 473.6L686.2 468.8M666.3 424.9L670.0 424.9L672.0 426.9L677.6 428.1L682.2 430.7L682.2 427.2L679.4 418.5L685.3 416.2M685.3 416.2L689.0 418.5L691.6 419.7M691.6 419.7L692.7 424.3L691.0 431.9L692.4 433.0M684.5 437.7L689.0 435.4L692.4 433.0M692.4 433.0L696.1 434.5L698.4 441.9L700.1 438.9L699.8 434.8L696.4 425.7M696.4 425.7L704.7 426.0L713.2 422.5M691.6 419.7L694.7 419.9L696.4 425.7M685.3 416.2L681.9 409.9L681.6 405.6L681.1 401.3L680.5 397.1L682.2 396.8M681.6 405.6L684.8 402.8L685.6 399.3L684.8 395.6M682.2 396.8L682.8 391.4L683.3 388.5L687.0 386.5L685.6 382.8M685.6 382.8L680.5 380.3L675.9 378.3M694.7 395.6L694.7 391.9L697.6 387.7L694.7 380.8M684.8 395.6L694.7 395.6M685.6 382.8L689.0 382.6L694.7 380.8M694.7 395.6L705.0 401.3L709.5 406.2M716.3 397.6L714.6 395.4L714.6 384.8L717.2 381.4M717.2 381.4L710.4 382.8L706.1 382.6L699.8 379.1L697.6 377.4M694.7 380.8L697.6 377.4M717.2 381.4L723.2 378.8L726.0 378.6L734.5 370.0L731.7 370.0L723.2 367.1L720.3 364.8L719.7 361.6M719.7 361.6L718.0 359.9L718.6 357.0M701.5 351.7L704.7 351.7L707.5 351.1L711.8 351.1L716.0 354.3L718.6 357.0M737.1 360.4L737.1 365.7L734.5 370.0M695.6 299.0L697.3 304.9M697.6 304.9L699.0 298.3L699.3 294.3M697.8 292.9L699.8 292.2L699.3 294.3M700.1 287.8L701.8 288.1L700.4 291.2L699.8 292.2M699.3 294.3L702.7 295.6L708.4 291.9M708.4 291.9L714.6 288.5L715.5 281.1L718.6 279.0M700.1 283.3L702.1 280.1L706.1 280.1L711.8 280.1L718.6 279.0M697.4 305.4L700.7 305.9L704.7 302.3L706.1 300.0L703.2 298.3L709.5 296.0M709.5 296.0L708.4 291.9M709.5 296.0L717.5 299.6L725.1 305.9L730.3 306.2M730.3 306.2L733.7 308.2L735.7 307.8M730.3 306.2L734.2 303.3M734.5 303.3L733.7 300.0L728.8 293.3L727.4 288.1L728.6 283.6L725.4 278.7L724.0 278.3M718.6 279.0L724.0 278.3M724.0 278.3L724.0 270.7L725.4 269.6M725.4 269.6L721.7 267.7L721.7 264.3L718.9 262.8L716.0 262.8M672.0 265.5L673.7 262.5L677.6 260.9M711.8 255.5L717.5 256.3L723.2 258.2L730.0 261.3M730.0 261.3L726.0 264.0L721.7 264.3M726.0 264.0L727.4 266.2L728.6 270.3L730.3 272.5M725.4 269.6L730.3 272.5L734.5 272.9L737.1 274.3M730.0 261.3L736.2 261.7M737.9 243.5L736.0 238.9L730.8 232.5L733.1 225.9L736.5 225.4L742.5 220.4L754.4 224.5L763.0 223.6L768.7 224.5L772.9 222.7L768.7 219.0L771.5 214.4L772.9 209.6L782.9 206.7L794.3 202.7L800.0 204.7L800.0 209.6L807.1 209.6L815.6 209.6L819.9 214.4L825.6 223.6L831.2 223.6L839.8 230.3L846.3 232.0M846.3 232.0L842.6 234.6L841.2 241.0L834.1 240.1L832.7 247.1L825.6 249.2L826.1 260.2M826.1 260.2L822.7 257.8L811.3 257.5L807.1 259.0L800.0 260.2M800.0 260.2L794.3 263.2L791.4 264.7L787.2 260.9L785.7 257.1L781.5 254.7L774.4 255.1L765.8 253.1L757.3 249.2L757.3 263.6M757.3 263.6L748.8 260.9L747.6 259.8M757.3 263.6L760.1 263.6L765.8 259.8L771.5 264.0L775.2 268.5L780.0 272.5L787.2 277.9M751.3 278.3L754.4 276.1L761.0 275.1L765.8 277.6L769.8 280.8L772.1 280.8M772.1 280.8L771.8 284.3L775.8 285.4L780.0 282.9L784.6 278.3L787.2 277.9M771.8 284.3L770.1 291.6L771.2 298.3L773.5 298.6L771.2 303.9M771.2 303.9L775.8 305.2L778.1 312.3L776.6 314.3L773.2 318.7M771.2 303.9L780.0 304.9L786.6 303.6L788.6 299.3L795.1 297.0L797.1 290.9L800.2 287.4L801.7 281.1L809.9 279.4M787.2 277.9L791.4 279.4L797.1 276.9L801.4 276.1L811.0 278.7M787.2 277.9L790.9 278.7L792.6 275.1L790.9 272.2L794.3 268.1L799.1 264.7L800.0 260.2M795.1 268.5L802.8 270.3L807.6 270.3M807.6 270.3L812.8 266.6L816.5 264.7L821.3 262.5L826.1 260.2M807.6 270.3L811.0 278.7L812.8 280.4L819.3 284.7M792.0 323.4L795.7 321.5L800.0 321.2L798.2 317.1L797.7 310.7L802.8 309.8L809.6 300.6L810.8 296.3L810.5 292.6L819.3 284.7M819.3 284.7L822.7 288.8L821.9 295.0L823.6 300.0L825.8 302.6L829.8 302.0L835.5 305.9L842.6 310.1L848.9 310.4L850.6 312.7L854.0 310.1L859.7 311.4M825.8 307.2L830.7 310.1L836.9 311.7L842.6 314.3L848.9 314.9L848.9 310.4M851.2 328.9L850.3 325.5L850.0 321.5L848.3 320.6L849.4 316.8L853.4 315.5L860.3 319.3M846.3 232.0L851.2 228.1L859.7 225.4M577.0 278.7L576.7 274.0L578.1 272.2L576.7 269.6L578.4 264.7L580.4 262.5L579.2 261.3L574.7 261.3L572.7 261.3M592.9 255.5L596.6 257.8L600.8 258.2L603.7 259.4L607.1 259.4M605.1 223.2L609.4 226.8L611.7 228.1L614.5 230.3M614.5 230.3L616.2 230.3L621.3 232.5L619.6 238.5M619.6 238.5L617.9 239.3L615.4 243.5L617.9 245.5M617.9 245.5L617.1 249.2L619.3 253.9M607.7 221.8L610.8 221.3L614.5 222.7L615.1 224.5M615.1 224.5L616.2 227.2L614.5 230.3M615.1 224.5L615.6 219.5L617.9 217.7L618.5 212.9M622.5 205.2L626.2 205.7M638.4 210.1L639.0 213.4L639.5 220.0L640.7 223.2M640.7 223.2L638.7 224.1L633.6 226.8L632.4 226.8L634.4 231.2L637.3 233.3M637.3 233.3L635.0 238.9L632.1 238.5L627.9 238.9L625.3 238.9M625.3 238.9L622.2 238.0L619.6 238.5M625.3 238.9L625.0 241.0L627.9 241.4M627.9 241.4L626.4 243.9L623.6 245.1L621.9 243.5L617.9 245.5M627.9 241.4L632.7 241.0L637.0 243.0M637.0 243.0L640.7 242.6L643.8 241.8M643.8 241.8L644.9 238.9L646.6 236.8M646.6 236.8L646.1 234.2M646.1 234.2L640.7 232.5L637.3 233.3M637.0 243.0L636.7 246.7M636.7 247.1L641.5 247.1L642.7 244.3L644.9 243.0M643.8 241.8L644.9 243.0M644.9 243.0L647.8 245.5L651.8 245.5M651.8 245.5L652.0 247.9L653.2 248.4M642.7 248.4L647.8 248.8L652.0 249.6L653.8 253.1L652.9 255.1L650.9 257.1L650.6 259.0L647.8 257.1L646.4 255.1L643.5 252.4L642.7 248.4M651.8 245.5L655.7 244.7M655.7 244.7L659.2 248.4L662.6 251.2L662.6 252.4M662.6 252.4L661.7 255.5L663.4 257.5L662.0 260.2M662.0 260.2L657.7 260.2L654.9 259.0M652.9 255.1L655.7 257.5L654.9 259.0M653.2 261.3L654.3 259.0L654.9 259.0M654.9 259.0L656.6 261.3L656.3 264.7L657.7 266.2M657.7 266.2L655.2 269.9M657.7 265.1L663.1 263.6M663.1 263.6L667.7 262.5L672.8 262.1M672.8 262.1L672.0 265.5M662.0 260.2L663.1 263.6M662.6 252.4L666.3 254.3L672.0 253.5L676.2 253.1L679.4 254.3M672.8 262.1L677.6 260.9M655.7 244.7L657.7 243.9L660.6 238.5L663.1 237.2M663.1 237.2L668.8 238.0L673.7 235.9M673.7 235.9L678.2 243.0L678.2 247.1M678.2 247.1L682.5 248.4M673.7 235.9L677.6 234.6L681.9 238.0L683.3 243.0L678.2 247.1M646.6 236.8L651.5 237.6L656.3 234.6L661.1 235.1M661.1 235.1L663.1 237.2M646.1 234.2L648.9 232.5L651.5 230.3M651.5 230.3L656.3 230.7L662.0 232.0M662.0 232.0L661.1 235.1M640.7 223.2L644.9 226.3L649.2 228.1L651.5 230.3M662.0 232.0L664.8 226.3L666.6 224.5M666.6 224.5L664.0 218.1L664.8 209.6M653.8 207.4L662.9 207.6L664.8 209.6M662.9 207.6L662.9 204.7L658.3 203.2M664.8 209.6L669.1 208.6L673.4 201.2M657.7 199.2L663.4 198.1L669.1 198.6L673.4 201.2M673.4 201.2L678.2 199.2L676.8 192.9M667.1 189.8L670.5 189.8L675.9 191.9M675.9 191.9L676.2 184.9L677.6 181.6M678.2 199.2L683.3 200.7L687.6 207.2L689.0 210.6L687.6 213.4L690.4 217.2M666.6 224.5L670.5 219.5L676.2 220.9L681.3 221.8L684.8 222.3L688.5 218.6L690.4 217.2M690.4 217.2L694.1 217.7L695.8 222.3L699.0 226.3L704.7 226.8L706.7 228.5L711.8 229.8L710.9 234.2L711.8 236.8L706.9 240.1M677.6 175.3L680.5 171.2L687.6 160.9L683.3 153.9L683.3 147.3L680.5 140.4L683.3 128.1L679.1 122.0L679.1 118.1L680.5 111.6L686.2 110.8M656.6 117.3L662.0 120.5L669.1 121.2L674.8 110.8L679.1 110.0L680.5 111.6M666.6 141.8L664.8 134.7L666.0 129.6L664.8 125.9L656.6 117.3M629.9 183.8L632.1 178.2L633.6 172.4L632.4 166.4L632.1 157.7L637.8 150.6L636.4 147.3L639.2 140.4L642.1 138.3L644.9 129.6L649.2 122.0L656.6 117.3M577.2 204.7L576.7 208.6L575.0 207.6L580.1 209.1M719.7 345.5L723.2 342.5L730.3 342.8L733.1 339.2L737.4 338.9L745.9 337.7L749.0 344.6M745.9 337.7L754.4 334.7L756.2 328.6L755.0 326.5M744.8 321.5L747.6 325.9L755.0 326.5M755.0 326.5L757.0 322.4L757.9 317.4M742.5 320.3L743.6 320.6" fill="none" stroke="#9a9a9a" stroke-width="1.4" stroke-linejoin="round"/>
</svg>
</div>
<div id="zoom" class="abs">
<svg width="26" height="52" viewBox="0 0 26 52" style="position:absolute;left:0;top:0"><path d="M13 8.5V19.5M7.5 14H18.5" stroke="#111" stroke-width="2.4"/><path d="M0 25.5H26" stroke="#bbb" stroke-width="1"/><path d="M8 39H18.5" stroke="#111" stroke-width="2.4"/></svg>
</div>
<svg class="abs" style="left:376px;top:618px" width="13" height="13" viewBox="0 0 13 13"><circle cx="6.5" cy="6.5" r="6" fill="#b9bcc0"/><path d="M3.6 8.2L6.5 5.3L9.4 8.2" fill="none" stroke="#eeeeee" stroke-width="1.8"/></svg>
<div id="attr" class="abs"><a>Leaflet</a> | © <a>Elastic Tile Service</a></div>
</body></html>
